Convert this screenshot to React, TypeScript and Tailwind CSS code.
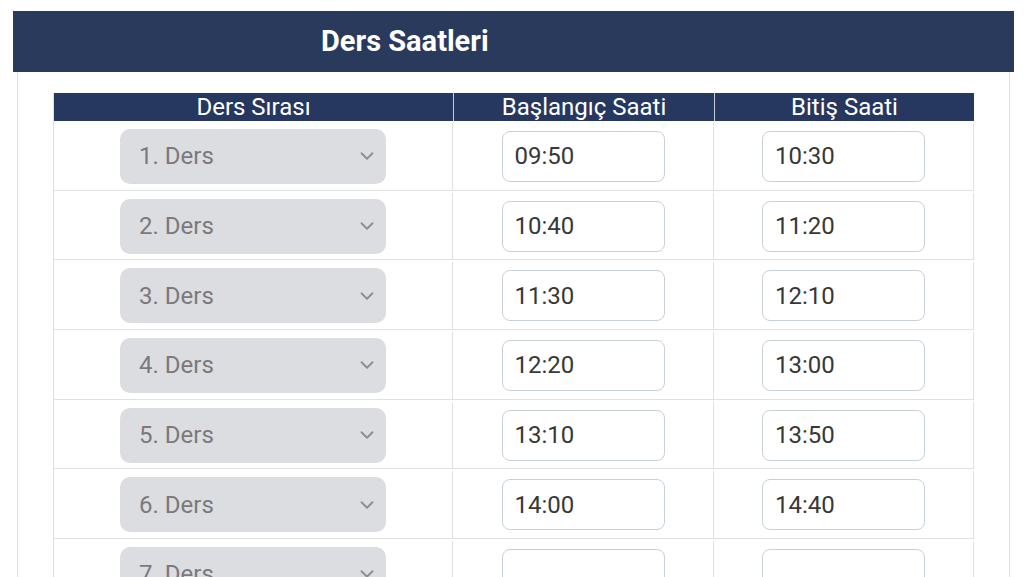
import { ChevronDown } from "lucide-react"

const rows = [
  { label: "1. Ders", start: "09:50", end: "10:30" },
  { label: "2. Ders", start: "10:40", end: "11:20" },
  { label: "3. Ders", start: "11:30", end: "12:10" },
  { label: "4. Ders", start: "12:20", end: "13:00" },
  { label: "5. Ders", start: "13:10", end: "13:50" },
  { label: "6. Ders", start: "14:00", end: "14:40" },
  { label: "7. Ders", start: "", end: "" },
]

const TimeInput = ({ value }: { value: string }) => (
  <div className="flex h-[51px] w-[163px] items-center rounded-[8px] border-[1.5px] border-[#c9d1d8] bg-white pl-[12px] text-[24px] text-[#383838]">
    {value}
  </div>
)

const App = () => {
  return (
    <div
      className="h-[577px] overflow-hidden bg-white pl-[13px] pr-[10px] pt-[11px]"
      style={{ fontFamily: "Roboto, 'Liberation Sans', sans-serif" }}
    >
      {/* Title bar */}
      <div className="flex h-[61px] items-center bg-[#2a3a5d] pl-[308px] text-[29px] font-bold text-white">
        Ders Saatleri
      </div>

      {/* Card */}
      <div className="mx-[4px] h-[600px] border-x border-[#e2e2e2] px-[35px] pt-[21px]">
        <div className="border-l border-[#dedede]">
          {/* Header */}
          <div className="grid h-[28px] grid-cols-[399px_261px_1fr] bg-[#263860] text-[24px] leading-[28px] text-white">
            <div className="text-center">Ders Sırası</div>
            <div className="border-l border-[#c8cdd8] text-center">Başlangıç Saati</div>
            <div className="border-l border-[#c8cdd8] text-center">Bitiş Saati</div>
          </div>

          {rows.map((r) => (
            <div
              key={r.label}
              className="grid h-[69.7px] grid-cols-[398px_261px_1fr] border-b border-[#e1e1e1] pt-[2px]"
            >
              <div className="flex items-center justify-center">
                <div className="flex h-[55px] w-[266px] items-center justify-between rounded-[10px] bg-[#dcdde0] pl-[19px] pr-[8px] text-[24px] text-[#7a7a7c]">
                  <span>{r.label}</span>
                  <ChevronDown className="h-[22px] w-[22px] text-[#8c8d90]" strokeWidth={2} />
                </div>
              </div>
              <div className="flex items-center justify-center border-l border-[#e1e1e1]">
                <TimeInput value={r.start} />
              </div>
              <div className="flex items-center justify-center border-x border-[#e1e1e1]">
                <TimeInput value={r.end} />
              </div>
            </div>
          ))}
        </div>
      </div>
    </div>
  )
}

export default App
